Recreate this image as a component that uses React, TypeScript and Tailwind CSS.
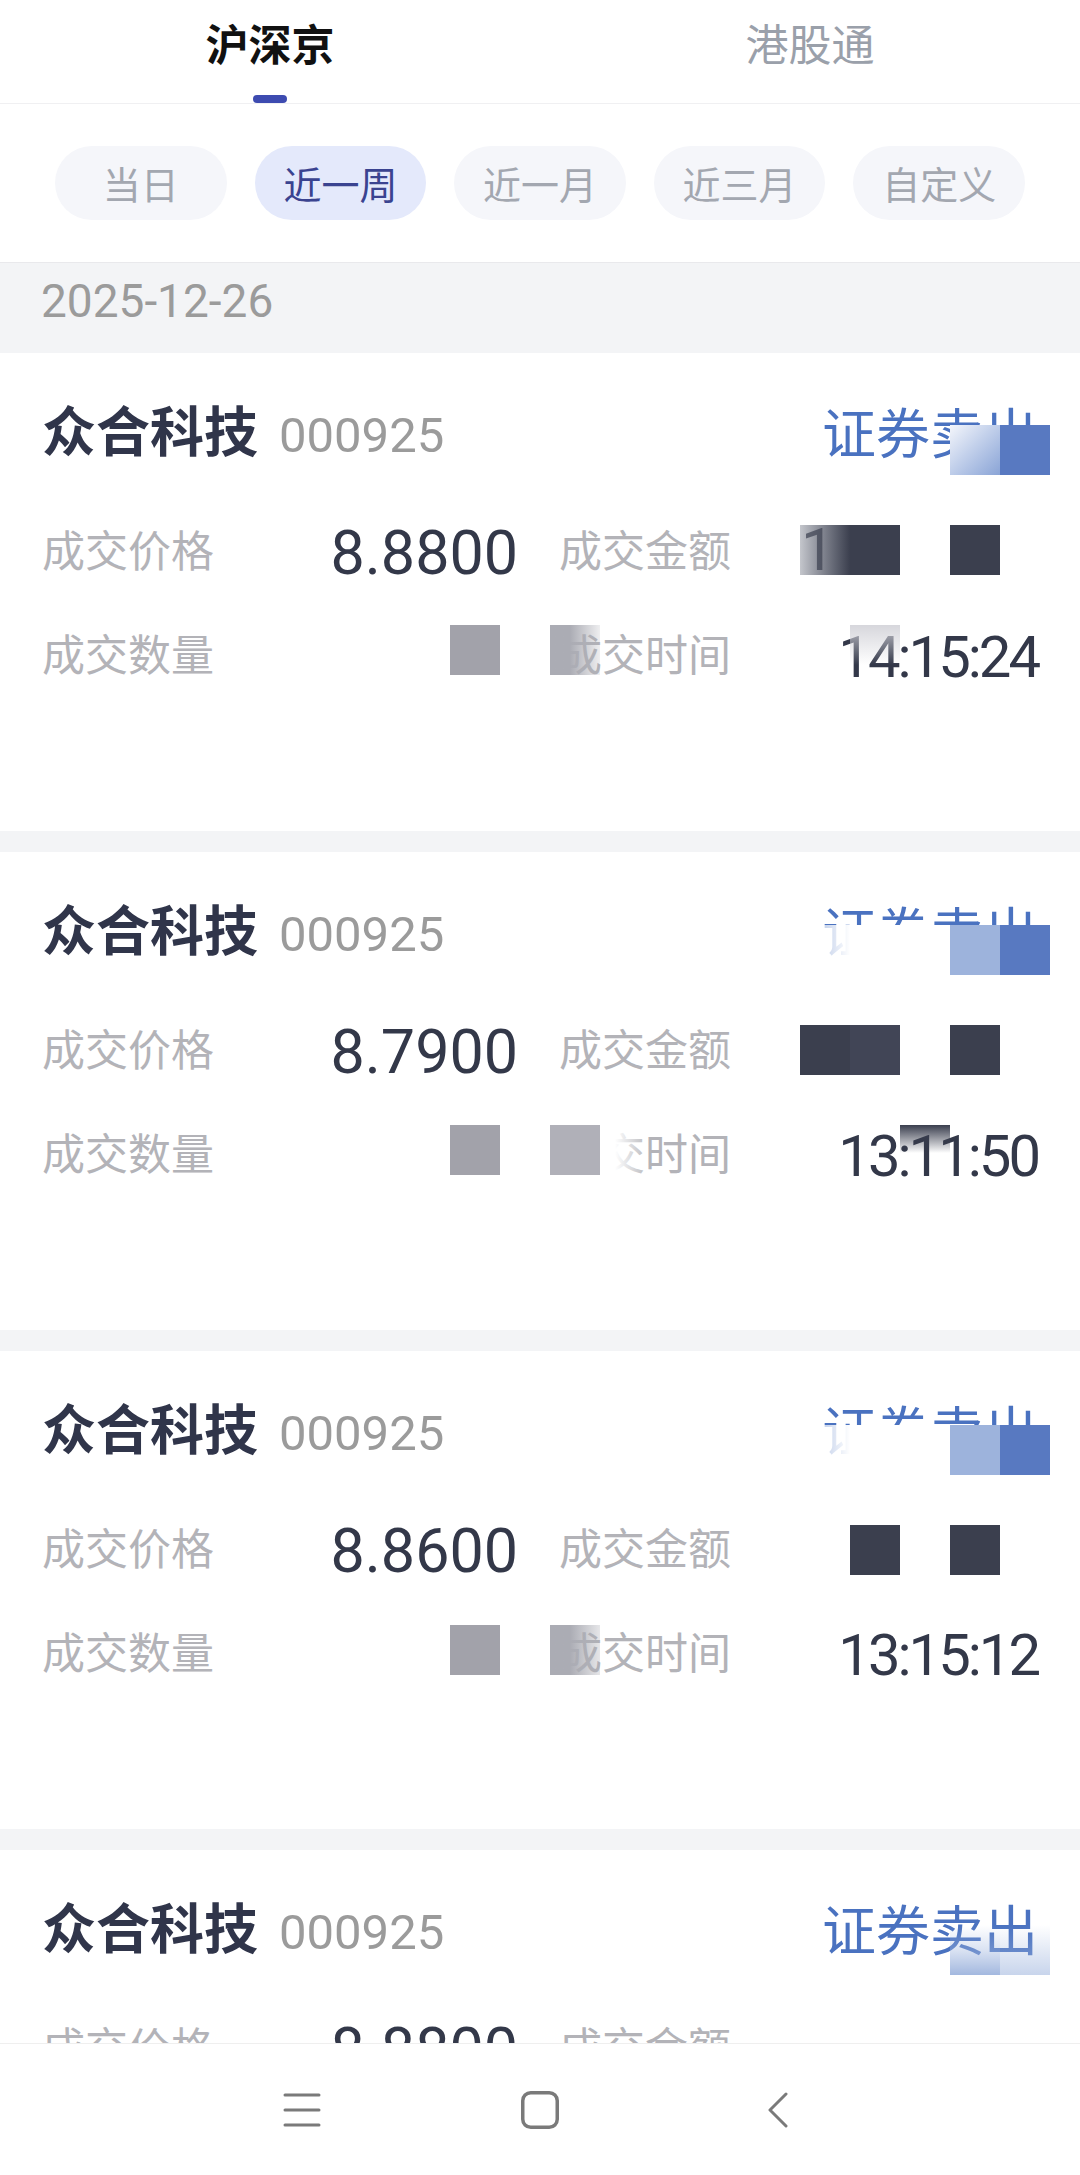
import React from "react";

const CJK = "font-['Noto_Sans_CJK_SC',sans-serif]";
const NUM = "font-['Roboto','Noto_Sans_CJK_SC',sans-serif]";

type CardProps = { price: string; time?: string };

function Card({ price, time }: CardProps) {
  return (
    <div className="h-[478px] shrink-0 bg-white px-[42px]">
      <div className="mt-[40px] flex h-[76px] items-center justify-between">
        <div className="flex items-baseline">
          <span className={`${CJK} text-[54px] font-bold leading-none text-[#30354a]`}>众合科技</span>
          <span className={`${NUM} ml-[21px] text-[49px] leading-none text-[#9b9b9b]`}>000925</span>
        </div>
        <span className={`${CJK} text-[54px] leading-none text-[#4a72c0]`}>证券卖出</span>
      </div>
      <div className="mt-[41px] grid grid-cols-[476px_1fr] gap-x-[41px] gap-y-[24px]">
        <div className="flex h-[80px] items-center justify-between">
          <span className={`${CJK} mb-[4px] text-[43px] leading-none text-[#b3b3b8]`}>成交价格</span>
          <span className={`${NUM} mt-[6px] text-[61px] leading-none text-[#333849]`}>{price}</span>
        </div>
        <div className="flex h-[80px] items-center justify-between">
          <span className={`${CJK} mb-[4px] text-[43px] leading-none text-[#b3b3b8]`}>成交金额</span>
        </div>
        <div className="flex h-[80px] items-center justify-between">
          <span className={`${CJK} mb-[4px] text-[43px] leading-none text-[#b3b3b8]`}>成交数量</span>
        </div>
        <div className="flex h-[80px] items-center justify-between">
          <span className={`${CJK} mb-[4px] text-[43px] leading-none text-[#b3b3b8]`}>成交时间</span>
          {time ? (
            <span className={`${NUM} mt-[6px] text-[58px] leading-none tracking-[-3px] text-[#333849]`}>{time}</span>
          ) : null}
        </div>
      </div>
    </div>
  );
}

function Sep() {
  return <div className="h-[21px] shrink-0 bg-[#f3f4f6]" />;
}

const pills = ["当日", "近一周", "近一月", "近三月", "自定义"];

export default function App() {
  return (
    <div className="relative flex h-[2175px] w-[1080px] flex-col overflow-hidden bg-white">
      <div className="flex min-h-0 flex-1 flex-col overflow-hidden">
        {/* Tabs */}
        <div className="flex h-[104px] shrink-0 border-b border-[#f0f0f2]">
          <div className="flex flex-1 flex-col items-center pt-[21px]">
            <span className={`${CJK} text-[43px] font-bold leading-none text-[#111111]`}>沪深京</span>
            <div className="mt-auto h-[8px] w-[34px] rounded-full bg-[#3d4bb0]" />
          </div>
          <div className="flex flex-1 flex-col items-center pt-[21px]">
            <span className={`${CJK} text-[43px] leading-none text-[#9aa0aa]`}>港股通</span>
          </div>
        </div>
        {/* Pills */}
        <div className="grid shrink-0 grid-cols-5 gap-x-[28px] border-b border-[#e9e9ec] px-[55px] py-[42px]">
          {pills.map((p, i) => (
            <div
              key={p}
              className={
                i === 1
                  ? `${CJK} flex h-[74px] items-center justify-center rounded-full bg-[#e4e9fb] text-[38px] leading-none text-[#3a4390]`
                  : `${CJK} flex h-[74px] items-center justify-center rounded-full bg-[#f5f6fa] text-[38px] leading-none text-[#a3a7b0]`
              }
            >
              {p}
            </div>
          ))}
        </div>
        {/* Date bar */}
        <div className="flex h-[90px] shrink-0 items-center bg-[#f3f4f6] pb-[14px] pl-[41px]">
          <span className={`${NUM} text-[46px] leading-none text-[#9b9b9b]`}>2025-12-26</span>
        </div>
        <Card price="8.8800" time="14:15:24" />
        <Sep />
        <Card price="8.7900" time="13:11:50" />
        <Sep />
        <Card price="8.8600" time="13:15:12" />
        <Sep />
        <Card price="8.8800" time="13:10:08" />
      </div>

      {/* Bottom navigation */}
      <div className="flex h-[132px] shrink-0 items-center border-t border-[#efefef] bg-white pl-[283px]">
        <svg width="38" height="34" viewBox="0 0 38 34" fill="none" stroke="#7a7a7a" strokeWidth="3" strokeLinecap="round">
          <line x1="2" y1="2" x2="36" y2="2" />
          <line x1="2" y1="17" x2="36" y2="17" />
          <line x1="2" y1="32" x2="36" y2="32" />
        </svg>
        <svg className="ml-[200px]" width="38" height="38" viewBox="0 0 38 38" fill="none" stroke="#7a7a7a" strokeWidth="3.5">
          <rect x="1.75" y="1.75" width="34.5" height="34.5" rx="8" />
        </svg>
        <svg className="ml-[209px]" width="20" height="36" viewBox="0 0 20 36" fill="none" stroke="#7a7a7a" strokeWidth="3" strokeLinecap="round" strokeLinejoin="round">
          <polyline points="18,2 2,18 18,34" />
        </svg>
      </div>

      {/* Mosaic redaction overlay */}
      <div className="pointer-events-none absolute inset-0">
        {/* card 1 */}
        <div className="absolute left-[950px] top-[425px] h-[50px] w-[50px] bg-linear-to-br from-[#f4f6fb] to-[#8aa4d6]" />
        <div className="absolute left-[1000px] top-[425px] h-[50px] w-[50px] bg-[#5879c1]" />
        <div className="absolute left-[800px] top-[525px] flex h-[50px] w-[50px] items-center overflow-hidden bg-linear-to-r from-[#c4c6cc] to-[#3b3f4e]">
          <span className={`${NUM} ml-[1px] text-[60px] leading-none text-[#3b3f4e]/70`}>1</span>
        </div>
        <div className="absolute left-[850px] top-[525px] h-[50px] w-[50px] bg-[#3b3f4e]" />
        <div className="absolute left-[950px] top-[525px] h-[50px] w-[50px] bg-[#3b3f4e]" />
        <div className="absolute left-[450px] top-[625px] h-[50px] w-[50px] bg-[#a2a2aa]" />
        <div className="absolute left-[550px] top-[625px] h-[50px] w-[50px] bg-linear-to-r from-[#abacb4] from-40% to-[#abacb4]/20" />
        <div className="absolute left-[850px] top-[625px] h-[40px] w-[50px] bg-linear-to-b from-[#d2d2d8]/90 to-white/0" />
        {/* card 2 */}
        <div className="absolute left-[800px] top-[925px] h-[50px] w-[50px] bg-linear-to-r from-white/40 to-white" />
        <div className="absolute left-[850px] top-[925px] h-[50px] w-[100px] bg-white" />
        <div className="absolute left-[950px] top-[925px] h-[50px] w-[50px] bg-[#9db3dc]" />
        <div className="absolute left-[1000px] top-[925px] h-[50px] w-[50px] bg-[#5879c1]" />
        <div className="absolute left-[800px] top-[1025px] h-[50px] w-[50px] bg-[#3b3f4e]" />
        <div className="absolute left-[850px] top-[1025px] h-[50px] w-[50px] bg-[#414556]" />
        <div className="absolute left-[950px] top-[1025px] h-[50px] w-[50px] bg-[#3b3f4e]" />
        <div className="absolute left-[450px] top-[1125px] h-[50px] w-[50px] bg-[#a2a2aa]" />
        <div className="absolute left-[550px] top-[1125px] h-[50px] w-[50px] bg-[#b0b0b8]" />
        <div className="absolute left-[600px] top-[1125px] h-[50px] w-[50px] bg-linear-to-r from-white from-30% to-white/0" />
        <div className="absolute left-[900px] top-[1125px] h-[28px] w-[50px] bg-linear-to-b from-[#3a3e4e] to-[#3a3e4e]/0" />
        {/* card 3 */}
        <div className="absolute left-[800px] top-[1425px] h-[50px] w-[50px] bg-linear-to-r from-white/40 to-white" />
        <div className="absolute left-[850px] top-[1425px] h-[50px] w-[100px] bg-white" />
        <div className="absolute left-[950px] top-[1425px] h-[50px] w-[50px] bg-[#9db3dc]" />
        <div className="absolute left-[1000px] top-[1425px] h-[50px] w-[50px] bg-[#5879c1]" />
        <div className="absolute left-[850px] top-[1525px] h-[50px] w-[50px] bg-[#3b3f4e]" />
        <div className="absolute left-[950px] top-[1525px] h-[50px] w-[50px] bg-[#3b3f4e]" />
        <div className="absolute left-[450px] top-[1625px] h-[50px] w-[50px] bg-[#a2a2aa]" />
        <div className="absolute left-[550px] top-[1625px] h-[50px] w-[50px] bg-linear-to-r from-[#abacb4] from-40% to-[#abacb4]/30" />
        {/* card 4 */}
        <div className="absolute left-[950px] top-[1925px] h-[50px] w-[50px] bg-linear-to-b from-[#a3b8df]/0 via-[#a3b8df]/40 to-[#a3b8df]" />
        <div className="absolute left-[1000px] top-[1925px] h-[50px] w-[50px] bg-linear-to-b from-white/0 to-[#a3b8df]/60" />
      </div>
    </div>
  );
}
